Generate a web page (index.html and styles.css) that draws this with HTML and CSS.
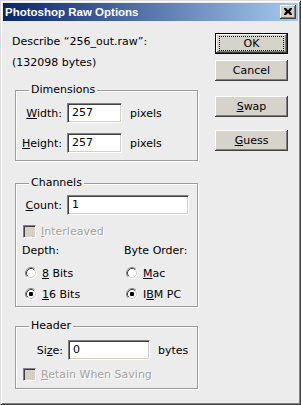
FILE: index.html
```html
<!DOCTYPE html>
<html>
<head>
<meta charset="utf-8">
<link rel="stylesheet" href="styles.css">
</head>
<body>
<div class="win">
  <div class="titlebar">
    <span class="title">Photoshop Raw Options</span>
    <span class="close"><svg width="8" height="7" viewBox="0 0 8 7"><path d="M0 0h2l2 2 2-2h2v1l-2 2.5 2 2.5v1h-2l-2-2-2 2h-2v-1l2-2.5-2-2.5z" fill="#000"/></svg></span>
  </div>
  <div class="client">
    <div class="left">
      <div class="line l1">Describe “256_out.raw”:</div>
      <div class="line l2">(132098 bytes)</div>

      <div class="group g-dim">
        <span class="legend">Dimensions</span>
        <div class="row">
          <span class="lbl"><u>W</u>idth:</span>
          <span class="field f-dim">257</span>
          <span class="unit">pixels</span>
        </div>
        <div class="row row2">
          <span class="lbl"><u>H</u>eight:</span>
          <span class="field f-dim">257</span>
          <span class="unit">pixels</span>
        </div>
      </div>

      <div class="group g-ch">
        <span class="legend">Channels</span>
        <div class="row">
          <span class="lbl"><u>C</u>ount:</span>
          <span class="field f-count">1</span>
        </div>
        <div class="check">
          <span class="box"></span>
          <span class="dis"><u>I</u>nterleaved</span>
        </div>
        <div class="cols">
          <div class="col">
            <div class="head">Depth:</div>
            <div class="radio"><svg class="rb" width="12" height="12" viewBox="0 0 12 12"><circle cx="6" cy="6" r="4.5" fill="#fff"/><path d="M2.11 9.89A5.5 5.5 0 0 1 9.89 2.11" fill="none" stroke="#808080"/><path d="M9.89 2.11A5.5 5.5 0 0 1 2.11 9.89" fill="none" stroke="#fff"/><path d="M2.82 9.18A4.5 4.5 0 0 1 9.18 2.82" fill="none" stroke="#404040"/><path d="M9.18 2.82A4.5 4.5 0 0 1 2.82 9.18" fill="none" stroke="#d4d0c8"/></svg><span><u>8</u> Bits</span></div>
            <div class="radio r2"><svg class="rb" width="12" height="12" viewBox="0 0 12 12"><circle cx="6" cy="6" r="4.5" fill="#fff"/><path d="M2.11 9.89A5.5 5.5 0 0 1 9.89 2.11" fill="none" stroke="#808080"/><path d="M9.89 2.11A5.5 5.5 0 0 1 2.11 9.89" fill="none" stroke="#fff"/><path d="M2.82 9.18A4.5 4.5 0 0 1 9.18 2.82" fill="none" stroke="#404040"/><path d="M9.18 2.82A4.5 4.5 0 0 1 2.82 9.18" fill="none" stroke="#d4d0c8"/><rect x="4" y="4" width="4" height="4" rx="1" fill="#000"/></svg><span><u>1</u>6 Bits</span></div>
          </div>
          <div class="col col-r">
            <div class="head">Byte Order:</div>
            <div class="radio"><svg class="rb" width="12" height="12" viewBox="0 0 12 12"><circle cx="6" cy="6" r="4.5" fill="#fff"/><path d="M2.11 9.89A5.5 5.5 0 0 1 9.89 2.11" fill="none" stroke="#808080"/><path d="M9.89 2.11A5.5 5.5 0 0 1 2.11 9.89" fill="none" stroke="#fff"/><path d="M2.82 9.18A4.5 4.5 0 0 1 9.18 2.82" fill="none" stroke="#404040"/><path d="M9.18 2.82A4.5 4.5 0 0 1 2.82 9.18" fill="none" stroke="#d4d0c8"/></svg><span><u>M</u>ac</span></div>
            <div class="radio r2"><svg class="rb" width="12" height="12" viewBox="0 0 12 12"><circle cx="6" cy="6" r="4.5" fill="#fff"/><path d="M2.11 9.89A5.5 5.5 0 0 1 9.89 2.11" fill="none" stroke="#808080"/><path d="M9.89 2.11A5.5 5.5 0 0 1 2.11 9.89" fill="none" stroke="#fff"/><path d="M2.82 9.18A4.5 4.5 0 0 1 9.18 2.82" fill="none" stroke="#404040"/><path d="M9.18 2.82A4.5 4.5 0 0 1 2.82 9.18" fill="none" stroke="#d4d0c8"/><rect x="4" y="4" width="4" height="4" rx="1" fill="#000"/></svg><span>I<u>B</u>M PC</span></div>
          </div>
        </div>
      </div>

      <div class="group g-hd">
        <span class="legend">Header</span>
        <div class="row">
          <span class="lbl lbl-size">Si<u>z</u>e:</span>
          <span class="field f-size">0</span>
          <span class="unit">bytes</span>
        </div>
        <div class="check check2">
          <span class="box"></span>
          <span class="dis"><u>R</u>etain When Saving</span>
        </div>
      </div>
    </div>

    <div class="right">
      <div class="btn ok"><span class="focus">OK</span></div>
      <div class="btn cancel">Cancel</div>
      <div class="btn swap"><u>S</u>wap</div>
      <div class="btn guess"><u>G</u>uess</div>
    </div>
  </div>
</div>
</body>
</html>
```
FILE: styles.css
```css
html, body {
  margin: 0;
  padding: 0;
  background: #ececec;
}
body {
  font-family: "DejaVu Sans", sans-serif;
  font-size: 11px;
  color: #000;
}
u { text-underline-offset: 1px; }

.win {
  width: 301px;
  height: 405px;
  box-sizing: border-box;
  border: 1px solid;
  border-color: #dcdcdc #404040 #404040 #dcdcdc;
  box-shadow: inset 1px 1px #fff, inset -1px -1px #808080;
  padding: 2px;
  background: #ececec;
  display: flex;
  flex-direction: column;
}

.titlebar {
  height: 18px;
  flex: none;
  background: linear-gradient(to right, #0a246a, #a6caf0);
  display: flex;
  align-items: center;
  justify-content: space-between;
  padding: 0 2px;
}
.title {
  font-family: "Liberation Sans", sans-serif;
  font-weight: bold;
  font-size: 11.5px;
  color: #fff;
}
.close {
  width: 16px;
  height: 14px;
  box-sizing: border-box;
  background: #d4d0c8;
  box-shadow: inset -1px -1px #404040, inset 1px 1px #fff, inset -2px -2px #808080;
  display: flex;
  align-items: center;
  justify-content: center;
  padding-bottom: 1px;
}
.close svg { display: block; }

.client {
  flex: 1;
  display: flex;
}
.left {
  width: 195px;
  padding-left: 9px;
  padding-top: 14px;
  box-sizing: border-box;
}
.line {
  height: 14px;
  line-height: 14px;
  white-space: nowrap;
}
.l2 { margin-top: 7px; }

.group {
  position: relative;
  margin-left: 3px;
  width: 183px;
  box-sizing: border-box;
  border: 1px solid #9d9d9d;
  box-shadow: inset 1px 1px #fff, 1px 1px #fff;
}
.legend {
  position: absolute;
  left: 13px;
  top: -8px;
  line-height: 14px;
  padding: 0 2px;
  background: #ececec;
}

.g-dim { margin-top: 20px; padding: 12px 0 7px; }
.g-ch { margin-top: 22px; padding: 11px 0 6px; }
.g-hd { margin-top: 19px; padding: 13px 0 7px; }

.row {
  display: flex;
  align-items: center;
  height: 20px;
}
.row2 { margin-top: 10px; }
.lbl {
  width: 46px;
  text-align: right;
  margin-right: 5px;
  white-space: nowrap;
}
.lbl-size { width: 47px; }
.field {
  height: 20px;
  box-sizing: border-box;
  background: #fff;
  border: 1px solid;
  border-color: #808080 #fff #fff #808080;
  box-shadow: inset 1px 1px #404040, inset -1px -1px #d4d0c8;
  padding-left: 4px;
  line-height: 18px;
}
.f-dim { width: 55px; }
.f-count { width: 122px; }
.f-size { width: 82px; }
.unit { margin-left: 8px; }

.check {
  display: flex;
  align-items: center;
  height: 13px;
  margin-top: 10px;
  padding-left: 7px;
}
.check2 { margin-top: 8px; }
.box {
  width: 13px;
  height: 13px;
  box-sizing: border-box;
  background: #d4d0c8;
  border: 1px solid;
  border-color: #808080 #fff #fff #808080;
  box-shadow: inset 1px 1px #404040, inset -1px -1px #d4d0c8;
  margin-right: 5px;
}
.dis {
  color: #a5a39c;
  text-shadow: 1px 1px 0 #fff;
}

.cols {
  display: flex;
  margin-top: 6px;
}
.col { padding-left: 6px; width: 106px; box-sizing: border-box; }
.col-r { padding-left: 2px; width: auto; }
.head { height: 14px; line-height: 14px; }
.radio {
  display: flex;
  align-items: center;
  height: 12px;
  margin-top: 9px;
  padding-left: 3px;
}
.col-r .radio { padding-left: 2px; }
.radio.r2 { margin-top: 9px; }
.rb { display: block; margin-right: 5px; flex: none; }

.right {
  margin-left: 17px;
  padding-top: 12px;
  display: flex;
  flex-direction: column;
}
.btn {
  width: 73px;
  height: 21px;
  box-sizing: border-box;
  background: #d6d3cd;
  box-shadow: inset -1px -1px #404040, inset 1px 1px #fff, inset -2px -2px #808080;
  display: flex;
  align-items: center;
  justify-content: center;
  line-height: 14px;
}
.ok {
  border: 1px solid #000;
  box-shadow: inset -1px -1px #404040, inset 1px 1px #fff, inset -2px -2px #808080;
}
.focus {
  width: 63px;
  height: 13px;
  outline: 1px dotted #000;
  text-align: center;
  line-height: 13px;
}
.cancel { margin-top: 6px; }
.swap { margin-top: 15px; }
.guess { margin-top: 13px; }
```
